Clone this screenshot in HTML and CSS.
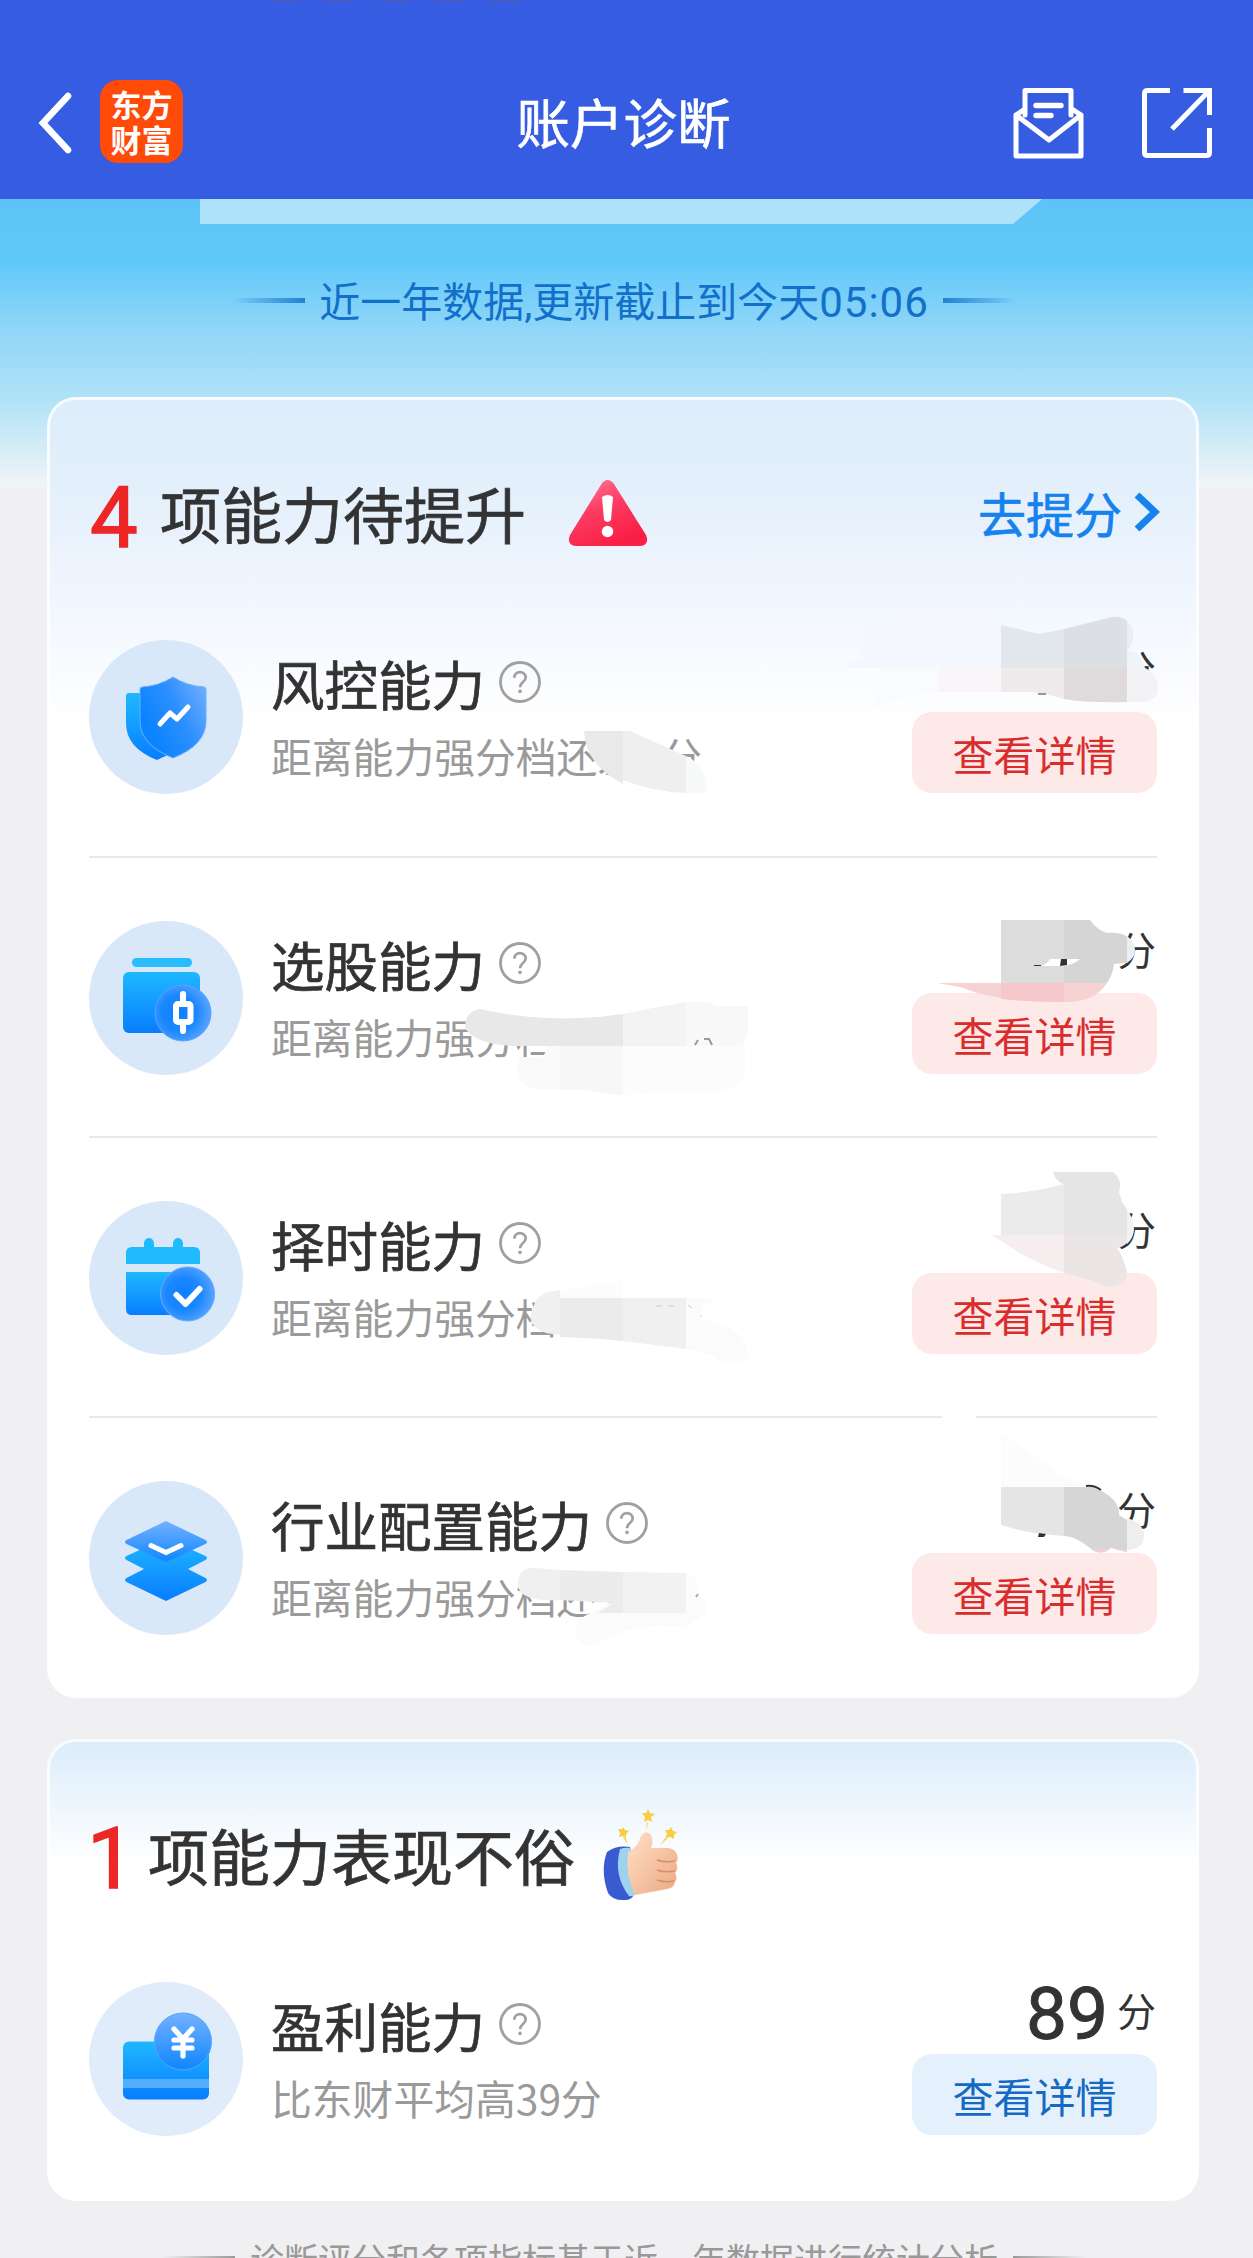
FILE: index.html
```html
<!DOCTYPE html>
<html lang="zh-CN">
<head>
<meta charset="utf-8">
<title>账户诊断</title>
<link rel="stylesheet" href="styles.css">
</head>
<body>
<svg width="0" height="0" class="defs" aria-hidden="true">
  <defs>
    <linearGradient id="g-body" x1="0" y1="0" x2="0" y2="1"><stop offset="0" stop-color="#1fb8ff"/><stop offset="1" stop-color="#087dff"/></linearGradient>
    <linearGradient id="g-glass" x1="1" y1=".2" x2=".2" y2=".7"><stop offset="0" stop-color="#6cabff"/><stop offset=".5" stop-color="#2d8fff"/><stop offset="1" stop-color="#0d84ff"/></linearGradient>
    <linearGradient id="g-coin" x1="0" y1="0" x2="0" y2="1"><stop offset="0" stop-color="#74b1ff"/><stop offset="1" stop-color="#0f86ff"/></linearGradient>
    <radialGradient id="g-lens" cx=".42" cy=".5" r=".62"><stop offset="0" stop-color="#0d80ff"/><stop offset=".5" stop-color="#1a87ff"/><stop offset="1" stop-color="#60a7ff"/></radialGradient>
    <linearGradient id="g-warn" x1="0" y1="0" x2=".5" y2="1"><stop offset="0" stop-color="#ff809c"/><stop offset=".5" stop-color="#fc3c63"/><stop offset="1" stop-color="#fa1f45"/></linearGradient>
    <linearGradient id="g-hand" x1="0" y1="0" x2="1" y2="1"><stop offset="0" stop-color="#ffe0c8"/><stop offset="1" stop-color="#eba982"/></linearGradient>
    <symbol id="help" viewBox="0 0 42 42"><circle cx="21" cy="21" r="19.5" fill="none" stroke="#a0a0a0" stroke-width="2.8"/><path d="M15.3 16.8c0-7.6 11.4-7.4 11.4-.3 0 4.4-5.7 4.8-5.7 9.7" fill="none" stroke="#a0a0a0" stroke-width="2.7"/><circle cx="21" cy="30.4" r="1.8" fill="#a0a0a0"/></symbol>
  </defs>
</svg>

<header class="topbar">
  <div class="status"><i></i><i></i><i></i><i></i><i></i></div>
  <div class="nav">
    <div class="nav-left">
      <svg class="back" viewBox="0 0 36 62" width="36" height="62"><path d="M32 4 7 31l25 27" fill="none" stroke="#fff" stroke-width="6.6" stroke-linecap="round"/></svg>
      <div class="brand"><span>东方</span><span>财富</span></div>
    </div>
    <h1>账户诊断</h1>
    <div class="nav-right">
      <svg viewBox="0 0 72 72" width="72" height="72" fill="none" stroke="#fff" stroke-width="5" stroke-linejoin="round" stroke-linecap="round"><path d="M12 28V3.5h46V28M3 28v41h65V28M3 28l9-6M68 28l-9-6M3 28l33 25 32-25"/><path d="M23 18.500h25M23 28.500h15" stroke-width="5.400"/></svg>
      <svg viewBox="0 0 72 72" width="72" height="72" fill="none" stroke="#fff" stroke-width="5"><path d="M29 3.500H6.500q-3 0-3 3v59q0 3 3 3h59q3 0 3-3V41M42.500 3.500h26V28M68 4 31 42" /></svg>
    </div>
  </div>
</header>

<main>
  <div class="banner"></div>
  <p class="caption"><i></i><span>近一年数据,更新截止到今天<span class="time">05:06</span></span><i class="r"></i></p>

  <section class="card improve">
    <div class="head">
      <b>4</b><h2>项能力待提升</h2>
      <svg class="warn" viewBox="0 0 80 68" width="80" height="68"><path d="M33.500 5q6-8 12.500 0l32 51q4 10-6 11H8Q-2 66 2 56Z" fill="url(#g-warn)"/><path d="M34 18q6-4 11 0l-2 23q-3.500 4-7 0Z" fill="#fff"/><circle cx="39.500" cy="52.500" r="5.700" fill="#fff"/></svg>
      <a class="go">去提分<svg viewBox="0 0 26 40" width="26" height="40"><path d="M3 3l18 17L3 37" fill="none" stroke="#1682ee" stroke-width="7"/></svg></a>
    </div>

    <article class="row">
      <svg class="ico" viewBox="0 0 154 154"><circle cx="77" cy="77" r="77"/><path d="M37 56q0-3 3-3h15l42 51q-13 9-29 16Q37 108 37 83Z" fill="url(#g-body)"/><path d="M84 37q14 9 31 10 2 0 2 3v31q0 24-33 37-33-13-33-37V50q0-3 2-3 17-1 31-10Z" fill="url(#g-glass)" stroke="#65b1ff" stroke-width="1"/><path d="M71 84l10-11 7 6 11-12" fill="none" stroke="#fff" stroke-width="5" stroke-linecap="round" stroke-linejoin="round"/></svg>
      <div class="info"><h3>风控能力<svg class="q"><use href="#help"/></svg></h3><p>距离能力强分档还差<span class="gap"></span>分</p></div>
      <div class="act"><div class="score"><small>分</small></div><button>查看详情</button></div>
    </article>
    <article class="row">
      <svg class="ico" viewBox="0 0 154 154"><circle cx="77" cy="77" r="77"/><rect x="43" y="37" width="60" height="9" rx="4.500" fill="#28bdfd"/><rect x="34" y="51" width="77" height="61" rx="6" fill="url(#g-body)"/><circle cx="94" cy="92" r="28" fill="url(#g-lens)" stroke="#54a5ff"/><path d="M94 73v9M94 104v6" stroke="#fff" stroke-width="6" stroke-linecap="round"/><rect x="87" y="83" width="14.500" height="18" rx="2" fill="none" stroke="#fff" stroke-width="6"/></svg>
      <div class="info"><h3>选股能力<svg class="q"><use href="#help"/></svg></h3><p>距离能力强分档</p></div>
      <div class="act"><div class="score"><small>分</small></div><button>查看详情</button></div>
    </article>
    <article class="row">
      <svg class="ico" viewBox="0 0 154 154"><circle cx="77" cy="77" r="77"/><path d="M37 63V52q0-6 6-6h12v-3c0-8 10-8 10 0v3h19v-3c0-8 10-8 10 0v3h11q6 0 6 6v11Z" fill="#20bafe"/><path d="M37 71h74v43H43q-6 0-6-6Z" fill="url(#g-body)"/><circle cx="98.600" cy="93" r="27" fill="url(#g-lens)" stroke="#65adff"/><path d="M87.500 94l9 9L110.500 88" fill="none" stroke="#fff" stroke-width="6" stroke-linecap="round" stroke-linejoin="round"/></svg>
      <div class="info"><h3>择时能力<svg class="q"><use href="#help"/></svg></h3><p>距离能力强分档</p></div>
      <div class="act"><div class="score"><small>分</small></div><button>查看详情</button></div>
    </article>
    <article class="row">
      <svg class="ico" viewBox="0 0 154 154"><circle cx="77" cy="77" r="77"/><path d="M77 57l39.500 18q3 2 0 4L99 88l17.500 9q3 2 0 4L77 120 37.500 101q-3-2 0-4L55 88l-17.500-9q-3-2 0-4Z" fill="url(#g-body)"/><path d="M77 40l39.500 19q3 2 0 4L77 81 37.500 63q-3-2 0-4Z" fill="url(#g-coin)"/><path d="M62 64.500 77 71.500 92 64.500" fill="none" stroke="#fff" stroke-width="5" stroke-linecap="round"/></svg>
      <div class="info"><h3>行业配置能力<svg class="q"><use href="#help"/></svg></h3><p>距离能力强分档还差</p></div>
      <div class="act"><div class="score"><small>分</small></div><button>查看详情</button></div>
    </article>

    <!-- mosaic brush strokes hiding the private figures -->
    <svg class="mosaic" viewBox="47 397 1152 1301" width="1152" height="1301">
      <g>
        <path fill="#f4f7fe" d="M846 668q2-8 14-10 1-24 18-38 60-12 123-2v50Z"/>
        <path fill="#e2e7eb" d="M1001 625l38 9 25-5v39h-63Z"/>
        <path fill="#dce0e5" d="M1064 629l48-12q9-1 15 4v47h-63Z"/>
        <path fill="#e9eef2" d="M1127 621q7 7 6 16t-6 14Z"/>
        <path fill="#f0f4f8" d="M1127 651h6q9 4 12 17h-18Z"/>
        <path fill="#fafcfe" d="M846 668h29v25q-40-6-29-25Z"/>
        <path fill="#f9fbfd" d="M875 668h63v24q-20-2-63 16Z"/>
        <path fill="#f9f5f9" d="M938 668h63v24h-63Z"/>
        <path fill="#efebec" d="M1001 668h63v31q-15-5-32-7h-31Z"/>
        <path fill="#dfdbdd" d="M1064 668h63v34q-40 1-63-3Z"/>
        <path fill="#f3f3f5" d="M1127 668h18q13 6 13 19 0 15-17 15h-14Z"/>
        <path d="M1038 694h8" stroke="#999" stroke-width="2"/>
      </g>
      <g>
        <path fill="#e9e9e9" d="M584 731h39v53q-38-20-39-53Z"/>
        <path fill="#efefef" d="M623 731h7l56 25v37q-33-1-63-13Z"/>
        <path fill="#f8fafa" d="M686 756q21 9 21 37h-21Z"/>
      </g>
      <g>
        <path fill="#dcdcdc" d="M1001 920h63v63h-63Z"/>
        <path fill="#d5d5d5" d="M1064 920h26q7 10 17 13 15-1 20 4v26l-13 1q-1 10-7 19h-43Z"/>
        <path fill="#eee" d="M1127 936q8 6 8 14t-8 13Z"/>
        <path fill="#f6d2d3" d="M937 983h170q-13 20-43 19-65 1-104-15Z"/>
        <path fill="#f6c8cb" d="M1001 983h63v19q-33 0-63-3Z"/>
        <path fill="#fff" d="M1040 966q6-1 10-7h30q-7 7-20 7Z"/>
        <path fill="#333" d="M1061 959h6v6l-7 1ZM1034 965h7v1h-7Z"/>
      </g>
      <g>
        <path fill="#e8e8e8" d="M465 1028q0-17 15-19 70 16 143 5v32H520q-44 0-55-18Z"/>
        <path fill="#f3f3f3" d="M623 1014q40-8 63-12v44h-63Z"/>
        <path fill="#f8f8f8" d="M686 1002q20-2 31 4h31v28l-6 12h-56Z"/>
        <path fill="#fafafa" d="M548 1046h12v43h-25q-18-4-18-22l2-10h24Z"/>
        <path fill="#f7f7f7" d="M560 1046h63v49q-20-1-35-5h-28Z"/>
        <path fill="#fcfcfc" d="M623 1046h122v27q-2 16-30 18l-92 4Z"/>
        <path d="M695 1045l3-5M704 1039h5l3 6" fill="none" stroke="#999" stroke-width="2"/>
      </g>
      <g>
        <path fill="#ebebeb" d="M1001 1194q30-1 63-10v51h-63Z"/>
        <path fill="#e5e5e5" d="M1053 1172h60q10 8 6 20l3 10 5 7v26h-63v-51q-8-2-11-12Z"/>
        <path fill="#f2f2f2" d="M1127 1209q14 22 0 35Z"/>
        <path fill="#f6eeee" d="M991 1235h73v38q-36-13-63-32Z"/>
        <path fill="#ece5e5" d="M1064 1235h63v8q-4 4-10 5 6 9 7 15 6 11-1 19-12 10-30-1l-29-8Z"/>
      </g>
      <g>
        <path fill="#fcfcfc" d="M560 1290l63-10v18h-63Z"/>
        <path fill="#f0f0f0" d="M560 1290v45q-29-2-29-18 2-20 17-25Z"/>
        <path fill="#ebebeb" d="M560 1298h63v43l-21-2-42-2Z"/>
        <path fill="#f0f0f0" d="M623 1298h63v51l-63-8Z"/>
        <path fill="#fbfbfb" d="M686 1298h30q-8 7-15 9v12q48 10 47 36l-4 6h-24q-10-9-34-12Z"/>
        <path d="M656 1306h6m6 0h6m14-1 4 3m8 7 2 2" stroke="#ccc" stroke-width="1"/>
      </g>
      <g>
        <path fill="#fefefe" d="M942 1412h34v10h-34Z"/>
        <path fill="#fcfcfc" d="M1001 1433q46 32 80 54h-80Z"/>
        <path fill="#e5e5e5" d="M1001 1487h63v49q-35-2-63-11Z"/>
        <path fill="#d6d6d6" d="M1064 1487h28q28 10 27 28l8 5v32l-16-4q-12 9-21 0-15-12-26-12Z"/>
        <path fill="#eee" d="M1127 1518q17 5 17 18t-17 14Z"/>
        <path fill="#f6cfd0" d="M1094 1549h16q-8 7-16 0ZM1114 1549l13 1v2Z"/>
        <path d="M1086 1486q8-1 15 4" fill="none" stroke="#333" stroke-width="2"/>
        <path fill="#333" d="M1039 1533l7 1-2 3h-6Z"/>
      </g>
      <g>
        <path fill="#fbfbfb" d="M610 1603h5l71-30q12 1 11 20 10 8 9 19l-20 16q-50-8-87 15-15 7-22-5-6-18 14-25Z"/>
        <path fill="#f0f0f0" d="M560 1570v30q-42 2-42-16 0-16 16-16Z"/>
        <path fill="#ececec" d="M560 1570l63 2v41h-25l15-10-53-3Z"/>
        <path fill="#f2f2f2" d="M623 1572l63 1v40h-63Z"/>
        <path d="M696 1597l2-3" stroke="#aaa" stroke-width="2"/>
      </g>
    </svg>
  </section>

  <section class="card good">
    <div class="head">
      <b>1</b><h2>项能力表现不俗</h2>
      <svg class="thumb" viewBox="0 0 76 92" width="76" height="92">
        <path d="M4 43q10-7 23-5l4 47q-2 6-9 6-12 1-17-7-8-23-1-41Z" fill="#3a5bd0"/>
        <path d="M17 40q5-2 11-1l4 47q-3 2-6 1-16-21-9-47Z" fill="#9ed3f0"/>
        <path d="M25 43q10-5 13-16 5-7 10-1 3 6 0 13h17q8 1 9 7 2 4-1 8 3 6-1 10 3 6 0 9-1 6-8 7L32 86q-10-20-7-43Z" fill="url(#g-hand)"/>
        <path d="M54 51q8 3 18 1M54 61q8 3 18 1M54 71q8 3 17 1" fill="none" stroke="#d68f68" stroke-width="1.600"/>
        <path d="M45 0l2 4 5 1-4 3 1 5-4-2-4 2 1-5-3-4 4 0ZM20 18l2 3 4 1-3 3v4l-3-2-4 1 1-4-2-4 4 0ZM68 18l2 4 4 1-3 3v4l-4-2-5 1 2-4-2-4 4 0ZM44 13l1 1-2 8ZM20 28l5 8-3-9ZM63 28l-6 8 8-7Z" fill="#f6cf42"/>
      </svg>
    </div>
    <article class="row">
      <svg class="ico pale" viewBox="0 0 154 154"><circle cx="77" cy="77" r="77"/><rect x="34" y="59.500" width="86" height="58" rx="6" fill="url(#g-body)"/><path d="M34 97h86v9H34Z" fill="#51aeff"/><circle cx="94" cy="59.500" r="28.500" fill="url(#g-coin)" stroke="#4fa7ff"/><path d="M85 47l9 10 9-10M94 57v17M85 58h18M85 66h18" fill="none" stroke="#fff" stroke-width="5.200" stroke-linecap="round" stroke-linejoin="round"/></svg>
      <div class="info"><h3>盈利能力<svg class="q"><use href="#help"/></svg></h3><p>比东财平均高39分</p></div>
      <div class="act"><div class="score"><strong>89</strong><small>分</small></div><button class="blue">查看详情</button></div>
    </article>
  </section>

  <p class="caption foot"><i></i><span>诊断评分和各项指标基于近一年数据进行统计分析</span><i class="r"></i></p>
</main>
</body>
</html>
```
FILE: styles.css
```css
* { box-sizing: border-box; margin: 0; padding: 0; }
html, body { height: 2258px; overflow: hidden; }
body {
  width: 1253px;
  font-family: "Noto Sans CJK SC", "Noto Sans", sans-serif;
  font-weight: 400;
  line-height: 1;
  color: #333;
  background: #f0f0f2;
}
h1, h2, h3 { font-weight: 400; -webkit-text-stroke: .7px currentColor; }
svg { display: block; flex: none; }
.defs { position: absolute; }

.topbar { height: 199px; background: #365ce1; }
.status { display: flex; gap: 26px; height: 2px; padding-left: 270px; }
.status i { width: 29px; height: 1px; background: #5f58a9; }
.nav { display: grid; grid-template-columns: 1fr auto 1fr; align-items: center; height: 117px; margin-top: 62px; padding: 0 40px 0 36px; }
.nav-left { display: flex; align-items: center; gap: 28px; }
.brand {
  display: flex; flex-direction: column; justify-content: center; align-items: center;
  width: 83px; height: 83px; margin-top: -2px; padding-bottom: 1px; border-radius: 18px;
  background: #ff4a08; color: #fff; font-size: 31px; font-weight: 700; line-height: 35px;
}
.nav h1 { font-size: 53.500px; color: #fff; line-height: 60px; margin: -3px 0 0 -2px; }
.nav-right { display: flex; justify-content: flex-end; gap: 56px; }

main {
  height: 2059px;
  background: linear-gradient(#5ec3f6 0, #5ec8f9 60px, #90d6f8 130px, #b0e2f7 200px, #d8eef7 255px, #f2f5f7 288px, #f0f0f2 289px);
}
.banner { width: 842px; height: 25px; margin-left: 200px; background: #aee2fa; clip-path: polygon(0 0, 100% 0, 813px 100%, 0 100%); }

.caption { display: flex; align-items: center; justify-content: center; gap: 14px; height: 60px; margin-top: 49px; padding-right: 5px; color: #1270ca; font-family: Roboto, "Noto Sans CJK SC", sans-serif; font-size: 41px; white-space: nowrap; }
.time { font-size: 42px; letter-spacing: 1px; }
.caption i { width: 73px; height: 5px; margin-top: -6px; background: linear-gradient(90deg, transparent, #247fd4); }
.caption i.r { background: linear-gradient(270deg, transparent, #247fd4); }

.card { position: relative; width: 1152px; margin-left: 47px; border: 3px solid #fffc; border-radius: 29px; background-clip: border-box; }
.improve { height: 1301px; margin-top: 64px; background: linear-gradient(#dcedfb 0, #e4f0fb 100px, #edf4fe 165px, #fff 330px); background-origin: border-box; }
.good { height: 462px; margin-top: 41px; background: linear-gradient(#dbecfb 0, #ecf5fd 60px, #fff 125px); background-origin: border-box; }
.head { display: flex; align-items: center; height: 177px; padding: 49px 36px 0 40px; }
.head b { width: 70px; margin-top: 9px; font-family: Roboto, sans-serif; font-size: 85px; font-weight: 400; -webkit-text-stroke: 1.500px currentColor; line-height: 80px; color: #ed2626; }
.head h2 { font-size: 61px; line-height: 70px; }
.warn { margin: -1px 0 0 42px; }
.go { display: flex; align-items: center; gap: 12px; margin: -2px 0 0 auto; color: #1682ee; font-size: 48px; line-height: 60px; -webkit-text-stroke: .7px currentColor; }
.good .head { height: 180px; padding-top: 45px; }
.good .head b { width: 61px; margin-left: -3px; }
.thumb { margin: 1px 0 0 28px; }

.row { display: grid; grid-template-columns: 154px 1fr 245px; column-gap: 28px; align-items: start; height: 280px; margin: 0 39px; padding-top: 63px; border-bottom: 2px solid #e8e8ea; }
.improve .head + .row { height: 281px; }
.row:last-of-type { border-bottom: 0; }
.good .row { padding-top: 60px; }
.ico { width: 154px; height: 154px; }
.ico > circle:first-child { fill: #d9e8f8; }
.pale > circle:first-child { fill: #e0ecfa; }
.info { padding-top: 13px; }
.info h3 { display: flex; align-items: center; gap: 14px; height: 60px; font-size: 53.500px; }
.q { width: 42px; height: 42px; margin-top: -2px; }
.info p { display: flex; align-items: center; height: 50px; margin-top: 18px; font-size: 40.800px; color: #9a9a9a; white-space: nowrap; }
.gap { width: 23px; }
.act { display: flex; flex-direction: column; }
.score { display: flex; justify-content: flex-end; align-items: center; gap: 9px; height: 72px; padding: 0 1px 14px 0; }
.score strong { font-family: Roboto, sans-serif; font-size: 73px; font-weight: 400; -webkit-text-stroke: 1px currentColor; line-height: 60px; margin-top: 5px; }
.score small { font-size: 39px; line-height: 58px; margin-top: -5px; }
button { height: 81px; border: 0; border-radius: 20px; background: #fde9e8; color: #d92d2d; font: 400 41px/80px "Noto Sans CJK SC", sans-serif; }
button.blue { background: #e4f0fb; color: #1469c2; }
.mosaic { position: absolute; left: -3px; top: -3px; }
.foot { height: 50px; margin-top: 33px; gap: 15px; padding-right: 5px; font-family: "Noto Sans CJK SC", sans-serif; font-size: 34px; color: #999; }
.foot i { height: 4px; margin-top: -3px; background: linear-gradient(90deg, transparent, #999); }
.foot i.r { background: linear-gradient(270deg, transparent, #999); }
```
